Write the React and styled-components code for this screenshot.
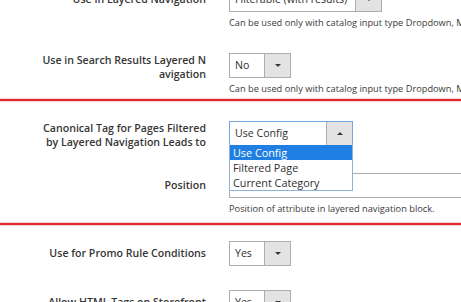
import React from 'react';
import styled, { createGlobalStyle } from 'styled-components';

const Global = createGlobalStyle`
  html, body { margin: 0; padding: 0; background: #fff; }
  body {
    width: 461px;
    height: 302px;
    overflow: hidden;
    font-family: "Open Sans", "Noto Sans", sans-serif;
    color: #303030;
  }
`;

const Page = styled.div`
  display: flex;
  flex-direction: column;
  margin-top: -13px;
`;

const Field = styled.div`
  display: grid;
  grid-template-columns: 206px 1fr;
  column-gap: 23px;
  margin-top: ${p => p.$mt || 0}px;
`;

const Label = styled.div`
  text-align: right;
  font-size: 10.6px;
  font-weight: 600;
  white-space: nowrap;
  line-height: ${p => (p.$multi ? '14px' : '25px')};
  color: #363636;
`;

const Control = styled.div`
  display: flex;
  flex-direction: column;
  align-items: flex-start;
  min-width: 0;
`;

const Select = styled.div`
  position: relative;
  display: flex;
  box-sizing: border-box;
  width: ${p => p.$w}px;
  height: 25px;
  border: 1px solid ${p => (p.$open ? '#73a6dc' : '#adadad')};
  background: #fff;
  z-index: ${p => (p.$open ? 2 : 0)};
`;

const SelectValue = styled.span`
  flex: 1;
  padding-left: 5px;
  font-size: 10.6px;
  line-height: 23px;
  white-space: nowrap;
  overflow: hidden;
  color: #303030;
`;

const Arrow = styled.span`
  flex: none;
  width: 25px;
  background: #e3e3e3;
  border-left: 1px solid #adadad;
  display: flex;
  align-items: center;
  justify-content: center;
  &::after {
    content: '';
    width: 0;
    height: 0;
    border-left: 3px solid transparent;
    border-right: 3px solid transparent;
    ${p =>
      p.$up
        ? 'border-bottom: 3px solid #41362f;'
        : 'border-top: 3px solid #41362f;'}
  }
`;

const List = styled.ul`
  position: absolute;
  top: 100%;
  left: -1px;
  right: -1px;
  margin: 0;
  padding: 0;
  list-style: none;
  background: #fff;
  border: 1px solid #8fb2dc;
  border-top: none;
`;

const Option = styled.li`
  font-size: 10.8px;
  line-height: 15px;
  padding-left: 3px;
  white-space: nowrap;
  background: ${p => (p.$active ? '#1f7fe3' : '#fff')};
  color: ${p => (p.$active ? '#fff' : '#303030')};
`;

const TextInput = styled.input`
  box-sizing: border-box;
  width: 270px;
  height: 25px;
  border: 1px solid #adadad;
  background: #fff;
  padding: 0 6px;
  margin: 0;
  font-family: inherit;
  font-size: 10.6px;
`;

const Note = styled.div`
  margin-top: 4px;
  font-size: 9.25px;
  line-height: 13px;
  white-space: nowrap;
  color: #3a3a3a;
`;

const Divider = styled.div`
  height: 2px;
  background: #dd2a2e;
  box-shadow: 0 0 1px 1px rgba(221, 42, 46, 0.22);
  margin-top: ${p => p.$mt || 0}px;
`;

function Dropdown({ value, width, open, options }) {
  return (
    <Select $w={width} $open={open}>
      <SelectValue>{value}</SelectValue>
      <Arrow $up={open} />
      {open && (
        <List>
          {options.map(o => (
            <Option key={o} $active={o === value}>
              {o}
            </Option>
          ))}
        </List>
      )}
    </Select>
  );
}

function LabelLines({ lines }) {
  return (
    <Label $multi={lines.length > 1}>
      {lines.map((l, i) => (
        <React.Fragment key={i}>
          {i > 0 && <br />}
          {l}
        </React.Fragment>
      ))}
    </Label>
  );
}

const NOTE_DD = 'Can be used only with catalog input type Dropdown, Multiple Select and Price.';

export default function App() {
  return (
    <>
      <Global />
      <Page>
        <Field>
          <LabelLines lines={['Use in Layered Navigation']} />
          <Control>
            <Dropdown value="Filterable (with results)" width={153} />
            <Note>{NOTE_DD}</Note>
          </Control>
        </Field>
        <Field $mt={24}>
          <LabelLines lines={['Use in Search Results Layered N', 'avigation']} />
          <Control>
            <Dropdown value="No" width={62} />
            <Note>{NOTE_DD}</Note>
          </Control>
        </Field>
        <Divider $mt={4} />
        <Field $mt={20}>
          <LabelLines lines={['Canonical Tag for Pages Filtered', 'by Layered Navigation Leads to']} />
          <Control>
            <Dropdown
              value="Use Config"
              width={124}
              open
              options={['Use Config', 'Filtered Page', 'Current Category']}
            />
          </Control>
        </Field>
        <Field $mt={24}>
          <LabelLines lines={['Position']} />
          <Control>
            <TextInput readOnly defaultValue="" />
            <Note>Position of attribute in layered navigation block.</Note>
          </Control>
        </Field>
        <Divider $mt={8} />
        <Field $mt={16}>
          <LabelLines lines={['Use for Promo Rule Conditions']} />
          <Control>
            <Dropdown value="Yes" width={62} />
          </Control>
        </Field>
        <Field $mt={24}>
          <LabelLines lines={['Allow HTML Tags on Storefront']} />
          <Control>
            <Dropdown value="Yes" width={62} />
          </Control>
        </Field>
      </Page>
    </>
  );
}
